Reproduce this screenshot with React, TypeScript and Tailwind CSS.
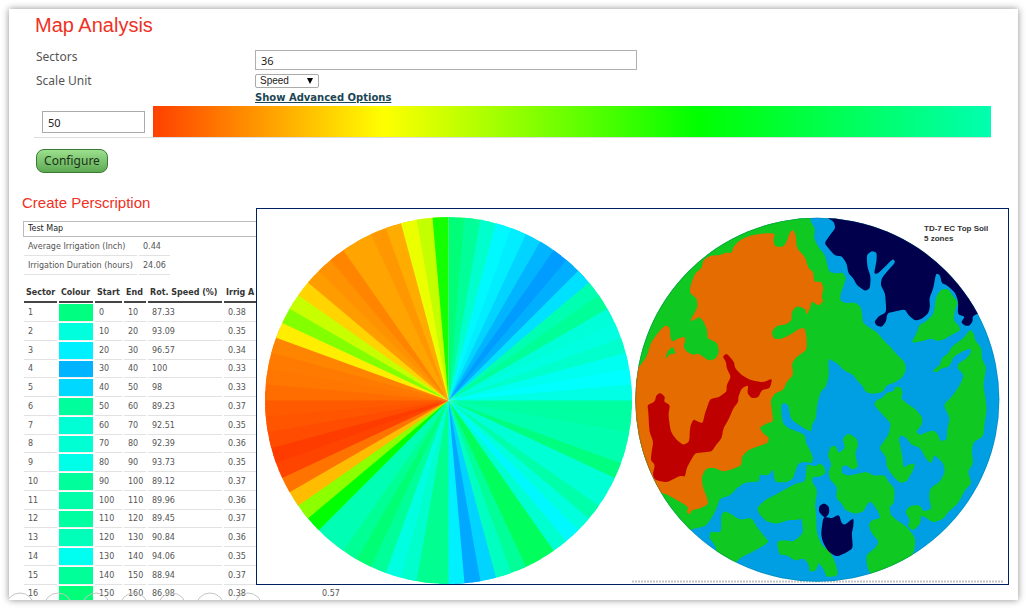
import React from "react";

type Row = [number, string, number, number, string, string, string?];

const rows: Row[] = [
  [1, "#00ff80", 0, 10, "87.33", "0.38"],
  [2, "#00ffdc", 10, 20, "93.09", "0.35"],
  [3, "#00f0ff", 20, 30, "96.57", "0.34"],
  [4, "#00b4ff", 30, 40, "100", "0.33"],
  [5, "#00d8ff", 40, 50, "98", "0.33"],
  [6, "#00ff9c", 50, 60, "89.23", "0.37"],
  [7, "#00ffd4", 60, 70, "92.51", "0.35"],
  [8, "#00ffd2", 70, 80, "92.39", "0.36"],
  [9, "#00ffe8", 80, 90, "93.73", "0.35"],
  [10, "#00ff9a", 90, 100, "89.12", "0.37"],
  [11, "#00ffa8", 100, 110, "89.96", "0.36"],
  [12, "#00ffa0", 110, 120, "89.45", "0.37"],
  [13, "#00ffb8", 120, 130, "90.84", "0.36"],
  [14, "#00fff0", 130, 140, "94.06", "0.35"],
  [15, "#00ff98", 140, 150, "88.94", "0.37"],
  [16, "#00ff78", 150, 160, "86.98", "0.38", "0.57"],
];

// One colour for every five degrees, clockwise from north.
const wedges = [
  "#00ff78", "#00ff99", "#00ffcc", "#00f8ff", "#00eeff", "#00d4ff", "#00b4ff", "#009cff", "#00b0ff",
  "#00e0ff", "#00ffb0", "#00ff98", "#00ffd8", "#00ffe0", "#00ffcc", "#00fff0", "#00ffff", "#00ffe4",
  "#00ffa0", "#00ffa2", "#00ffae", "#00ffae", "#00ff80", "#00ffd4", "#00ffd4", "#00ffaa", "#00ffdc",
  "#00f8ff", "#00ffd0", "#00ff5c", "#00ff5c", "#00ff98", "#00ffc0", "#00d4ff", "#00a8ff", "#00f0ff",
  "#00ff90", "#00ff90", "#00ffcc", "#00ffe0", "#00ff98", "#00ff74", "#00ff94", "#00ffb4", "#00ffb4",
  "#00ff00", "#8cff00", "#ffbc00", "#ff7400", "#ff4400", "#ff3c00", "#ff4c00", "#ff5400", "#ff5a00",
  "#ff6c00", "#ff7600", "#ff7a00", "#ff8400", "#ffee00", "#84ff00", "#c8ff00", "#ffd400", "#ff9c00",
  "#ff9200", "#ff8400", "#ffa400", "#ffa400", "#ff9800", "#ffac00", "#ecff00", "#c4ff00", "#14ff00",
];

function wedgePath(i: number) {
  const at = (deg: number) => {
    const a = (deg * Math.PI) / 180;
    return `${(448.5 + 183.5 * Math.sin(a)).toFixed(2)} ${(400.5 - 183.5 * Math.cos(a)).toFixed(2)}`;
  };
  // Each wedge runs under the next one so that no seam shows between them.
  const end = i === wedges.length - 1 ? 360 : i * 5 + 8;
  return `M448.5 400.5L${at(i * 5)}A183.5 183.5 0 0 1 ${at(end)}Z`;
}

// Closed outline through the given points, with each corner rounded off.
function blob(text: string) {
  const p = text.split(" ").map((s) => s.split(",").map(Number));
  const near = (a: number[], b: number[]) =>
    `${(a[0] + (b[0] - a[0]) * 0.3).toFixed(1)} ${(a[1] + (b[1] - a[1]) * 0.3).toFixed(1)}`;
  return (
    p
      .map((q, i) => {
        const prev = p[(i + p.length - 1) % p.length];
        const next = p[(i + 1) % p.length];
        return `${i ? "L" : "M"}${near(q, prev)}Q${q[0]} ${q[1]} ${near(q, next)}`;
      })
      .join("") + "Z"
  );
}

const GREEN = "#0fc822";
const ORANGE = "#e46c00";
const RED = "#be0000";
const NAVY = "#00004c";

const zones: [string, string][] = [
  [GREEN, "540,20 542,50 555,70 552,100 565,125 585,150 592,180 598,200 612,205 640,203 648,220 640,245 632,265 630,285 645,295 675,292 692,305 697,330 698,352 720,370 740,380 760,405 785,430 800,448 825,472 828,495 815,520 790,535 770,540 758,562 725,567 705,560 700,545 680,525 670,510 640,495 625,478 597,460 595,480 597,510 588,545 572,560 565,585 560,610 558,640 545,660 545,680 525,672 500,655 482,642 475,600 460,593 453,605 458,655 478,672 500,678 525,690 528,715 540,735 550,760 545,775 525,770 505,775 495,800 490,820 470,832 435,832 430,800 428,793 415,812 388,808 388,830 345,832 320,850 300,872 270,880 260,910 245,940 225,965 185,972 150,1000 0,1000 -40,900 -40,0 200,-20"],
  [ORANGE, "-20,520 15,495 28,485 50,455 62,415 75,395 95,370 110,360 120,370 121,400 128,410 145,400 165,395 165,410 160,425 170,440 190,450 205,445 225,460 240,467 258,460 267,440 262,415 245,405 232,400 232,375 218,345 205,335 195,345 180,348 190,330 203,305 200,280 180,265 180,245 195,205 215,190 220,165 240,152 270,150 290,142 305,145 310,125 330,105 360,92 400,85 435,85 430,105 435,125 460,125 470,110 480,80 490,75 497,90 500,130 525,155 535,190 550,200 552,230 575,230 580,250 575,275 580,290 565,302 545,288 540,310 530,330 525,310 500,303 485,320 485,345 470,358 440,362 425,380 430,400 450,403 480,390 510,370 525,370 530,400 530,435 500,455 485,475 490,510 470,530 460,555 435,565 422,585 425,610 430,650 410,655 388,668 400,685 418,700 412,715 380,725 355,735 335,755 335,780 310,792 280,800 250,788 228,790 215,815 218,845 230,875 235,898 205,912 185,915 180,928 170,922 175,905 140,885 110,868 88,862 0,820 -40,700"],
  [GREEN, "105,465 112,440 128,424 138,446 120,446"],
  [RED, "278,455 290,445 312,470 315,490 335,510 360,525 400,532 427,520 420,550 395,555 385,577 365,580 352,565 355,540 335,550 325,575 325,590 310,610 295,645 280,670 275,700 258,720 245,740 215,742 195,745 180,770 170,790 165,815 150,812 135,820 110,832 75,825 68,808 75,780 62,765 65,740 70,710 58,680 55,620 52,600 75,590 78,572 90,563 105,575 102,590 120,600 115,630 122,680 140,705 160,720 178,710 180,665 190,643 205,650 218,655 225,625 232,605 240,582 265,577 290,560 290,540 303,515 290,490 288,470"],
  [NAVY, "585,20 590,38 612,50 616,70 600,90 583,115 600,135 615,152 635,153 650,175 655,205 670,220 680,240 705,258 720,250 722,215 712,185 710,150 725,138 740,142 740,165 732,207 745,205 780,170 790,162 796,172 775,195 755,220 752,240 765,265 768,300 768,322 745,335 733,350 740,362 755,366 768,350 772,325 790,320 825,313 835,330 855,347 875,342 895,325 900,305 898,280 910,250 918,205 930,210 935,235 950,240 975,262 985,290 983,328 1005,335 993,352 1005,362 1018,362 1028,350 1028,333 1050,323 1100,300 1000,0 700,-60"],
  [GREEN, "843,414 860,385 868,360 890,348 912,325 918,275 935,252 955,252 970,275 984,290 975,315 970,345 985,360 992,375 975,385 960,392 945,402 925,408 900,400 880,408"],
  [GREEN, "1020,373 1032,385 1035,405 1055,430 1055,460 1068,485 1065,510 1060,540 1068,590 1070,615 1063,660 1060,695 1030,710 1025,740 1030,775 1013,800 1025,835 1005,855 985,895 955,920 940,942 910,953 890,940 872,930 872,955 850,977 833,965 840,945 825,920 840,902 870,900 880,920 905,912 897,880 900,850 930,830 945,800 940,775 920,755 912,750 905,775 890,765 870,728 845,720 830,700 815,690 806,700 812,730 818,760 820,788 838,778 855,775 850,795 838,815 830,830 810,834 790,815 770,785 768,755 747,730 760,710 775,690 780,670 782,655 750,620 732,600 740,585 760,577 770,562 790,560 797,543 814,548 818,565 813,580 830,595 860,615 878,640 875,660 858,680 870,690 895,680 912,676 925,690 930,708 950,705 952,670 960,640 940,600 965,575 990,540 1002,510 982,490 985,475 1010,460 1024,440 1020,430 1000,438 970,455 958,485 935,490 920,502 906,498 930,480 935,460 955,445 965,425 1000,400"],
  [GREEN, "638,700 655,685 680,700 685,720 675,745 685,787 665,794 650,780 635,785 635,805 655,812 690,805 710,800 730,812 765,810 775,830 794,850 792,895 778,905 782,930 800,945 830,965 857,1000 852,1045 800,1120 735,1130 712,1090 708,1050 735,1030 747,1010 725,985 716,960 725,945 752,940 745,920 735,905 722,888 710,900 700,920 675,927 645,915 635,895 618,880 622,845 600,825 595,800 605,780 593,750 602,725 618,722 625,745 645,730"],
  [GREEN, "530,777 555,784 570,775 583,785 587,805 570,815 548,815 546,830 562,855 555,900 558,925 560,985 575,1020 600,1040 610,1060 620,1085 624,1112 590,1117 580,1090 565,1073 560,1095 540,1102 535,1075 520,1060 495,1067 470,1050 448,1050 440,1010 460,1005 490,1010 520,985 515,940 500,945 475,945 440,957 410,950 390,930 380,910 405,885 435,870 470,850 500,835 524,830 528,810"],
  [GREEN, "273,930 285,918 300,925 330,945 365,938 380,965 400,990 417,1010 395,1025 360,1045 335,1055 310,1080 265,1060 255,1020 238,1000 240,980 274,982"],
  [NAVY, "582,894 597,905 598,925 585,940 566,920 568,903"],
  [NAVY, "580,935 605,940 627,928 635,955 645,960 671,938 670,965 665,985 669,1030 645,1045 620,1055 595,1040 578,1010 573,985"],
];

function MapPanel() {
  return (
    <svg viewBox="257 209 751 375" className="block h-full w-full" role="img" aria-label="Sector wheel and soil zones">
      <defs>
        <clipPath id="field">
          <circle cx="562" cy="584" r="546" />
        </clipPath>
      </defs>
      <g>
        {wedges.map((c, i) => (
          <path key={i} d={wedgePath(i)} fill={c} />
        ))}
      </g>
      <path d="M632 581.5H1003" stroke="#c4c4c4" strokeWidth="2" strokeDasharray="2 1" />
      <g transform="translate(630 205) scale(.33333)">
        <g clipPath="url(#field)">
          <rect width="1130" height="1140" fill="#009fe3" />
          {zones.map(([fill, pts], i) => (
            <path key={i} d={blob(pts)} fill={fill} />
          ))}
        </g>
        <circle cx="562" cy="584" r="545" fill="none" stroke="#003b30" strokeOpacity=".25" strokeWidth="2" />
      </g>
      <g className="font-['Liberation_Sans',sans-serif] text-[8px] font-bold" fill="#333">
        <text x="924" y="231">TD-7 EC Top Soil</text>
        <text x="924" y="241">5 zones</text>
      </g>
    </svg>
  );
}

const line = "border-b border-[#e2e2e2] px-1 py-0";
const head = "border-b-2 border-[#444] px-[2px] py-0 text-left font-bold text-[#333] whitespace-nowrap";

export default function App() {
  return (
    <div className="flex h-screen bg-white pt-[9px] pr-2 pb-2 pl-[9px] font-['DejaVu_Sans',sans-serif] text-[#555]">
      <main className="relative min-w-0 flex-1 overflow-hidden bg-white pt-1 shadow-[0_0_7px_rgba(0,0,0,0.45)]">
        <form
          className="mr-[27px] ml-[25px] font-['Noto_Sans',sans-serif] text-[12px]"
          onSubmit={(e) => e.preventDefault()}
        >
          <h1 className="pl-px font-['Liberation_Sans',sans-serif] text-[20px] leading-6 text-[#ee3124]">Map Analysis</h1>
          <div className="mt-[13px] grid grid-cols-[219px_1fr] gap-y-1 pl-[2px] leading-[14px]">
            <label htmlFor="sectors">Sectors</label>
            <input
              id="sectors"
              defaultValue="36"
              className="h-5 w-[382px] border border-[#b0b0b0] bg-white px-[5px] text-[11px] text-[#222]"
            />
            <label htmlFor="unit">Scale Unit</label>
            <span className="relative flex w-16">
              <select
                id="unit"
                className="h-[14px] w-full appearance-none rounded-[2px] border border-[#aaa] bg-white px-1 font-['Liberation_Sans',sans-serif] text-[10px] leading-3 text-[#222]"
              >
                <option>Speed</option>
              </select>
              <svg viewBox="0 0 6 6" className="pointer-events-none absolute top-1 right-[6px] h-[6px] w-[6px]">
                <path d="M0 0H6L3 6Z" fill="#000" />
              </svg>
            </span>
            <a
              href="#advanced"
              className="col-start-2 justify-self-start font-['DejaVu_Sans',sans-serif] text-[10px] leading-3 font-bold text-[#1b4654] underline"
            >
              Show Advanced Options
            </a>
          </div>
          <div className="mt-[2px] flex h-8 items-start border-b border-[#ddd]">
            <input
              aria-label="Minimum"
              defaultValue="50"
              className="mt-[5px] ml-2 h-[22px] w-[103px] border border-[#aaa] bg-white px-[5px] text-[11px] text-[#222]"
            />
            <div className="ml-2 h-[31px] flex-1 bg-[linear-gradient(90deg,#ff4000_0%,#ffff00_27.5%,#00ff00_65%,#00ffb0_100%)]" />
          </div>
          <button
            type="submit"
            className="mt-[11px] ml-[2px] block h-6 w-[72px] rounded-[8px] border border-[#3c7a34] bg-linear-to-b from-[#9be08d] to-[#5fa954] text-[12px] leading-4 text-[#1c3318]"
          >
            Configure
          </button>
        </form>

        <section className="mt-[21px] ml-[13px] text-[8px] leading-[10px]">
          <h2 className="font-['Liberation_Sans',sans-serif] text-[15px] leading-[18px] text-[#ee3124]">Create Perscription</h2>
          <select
            aria-label="Map"
            className="mt-[9px] ml-px block h-4 w-[300px] appearance-none border border-[#bbb] bg-white px-1 text-[8px] leading-[12px] text-[#222]"
          >
            <option>Test Map</option>
          </select>
          <table className="border-separate border-spacing-x-[2px] border-spacing-y-px">
            <tbody>
              <tr className="h-[18px]">
                <th scope="row" className={`${line} w-[113px] text-left font-normal whitespace-nowrap`}>Average Irrigation (Inch)</th>
                <td className={`${line} w-[30px]`}>0.44</td>
              </tr>
              <tr className="h-[18px]">
                <th scope="row" className={`${line} text-left font-normal whitespace-nowrap`}>Irrigation Duration (hours)</th>
                <td className={line}>24.06</td>
              </tr>
            </tbody>
          </table>
          <table className="mt-2 w-[400px] table-fixed border-separate border-spacing-x-[2px] border-spacing-y-px">
            <colgroup>
              <col className="w-[33px]" />
              <col className="w-[34px]" />
              <col className="w-[27px]" />
              <col className="w-[22px]" />
              <col className="w-[74px]" />
              <col className="w-[92px]" />
              <col />
            </colgroup>
            <thead>
              <tr className="h-[18px]">
                <th className={head}>Sector</th>
                <th className={head}>Colour</th>
                <th className={head}>Start</th>
                <th className={head}>End</th>
                <th className={head}>Rot. Speed (%)</th>
                <th className={head}>Irrig A</th>
                <td className={head} />
              </tr>
            </thead>
            <tbody>
              {rows.map(([n, colour, start, end, speed, irrig, last]) => (
                <tr key={n} className="h-[18px] nth-[4n]:h-[17px]">
                  <td className={line}>{n}</td>
                  <td className="border-b border-[#eee] bg-clip-padding p-0" style={{ backgroundColor: colour }} />
                  <td className={line}>{start}</td>
                  <td className={line}>{end}</td>
                  <td className={line}>{speed}</td>
                  <td className={line}>{irrig}</td>
                  <td className={line}>{last}</td>
                </tr>
              ))}
            </tbody>
          </table>
        </section>

        <div className="absolute top-[199px] right-[9px] left-[247px] h-[377px] border border-[#002060] bg-white">
          <MapPanel />
        </div>
        <svg viewBox="0 0 260 8" className="absolute bottom-0 left-0 h-2 w-[260px]" fill="none" stroke="#c4c4c4">
          {[11, 49, 87, 125, 163, 201, 239].map((x) => (
            <circle key={x} cx={x} cy="15" r="14" />
          ))}
        </svg>
      </main>
    </div>
  );
}
